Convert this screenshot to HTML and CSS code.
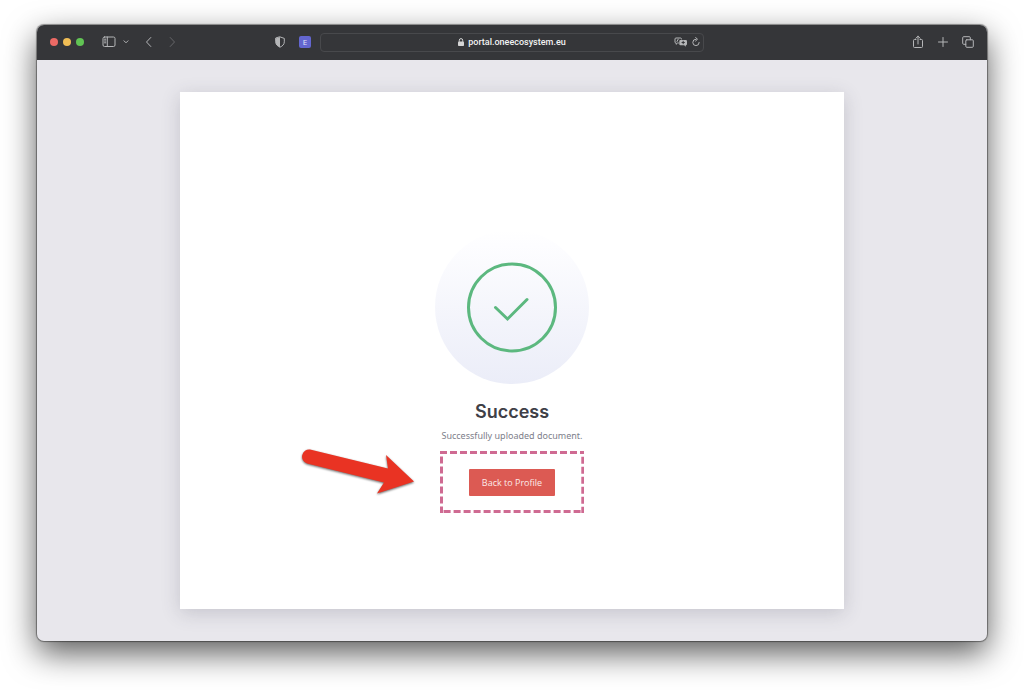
FILE: index.html
```
<!DOCTYPE html>
<html lang="en">
<head>
  <meta charset="UTF-8">
  <title>Success – portal.oneecosystem.eu</title>
  <meta name="viewport" content="width=device-width, initial-scale=1.0">
  <link rel="stylesheet" href="styles.css">
</head>
<body>
  <div class="window">
    <header class="toolbar">
      <div class="tools-left">
        <span class="light red"></span>
        <span class="light yellow"></span>
        <span class="light green"></span>
        <button class="tool sidebar" aria-label="Sidebar">
          <svg width="14" height="12" viewBox="0 0 14 12"><rect x="1" y="1" width="12" height="9.5" rx="1.5"/><path d="M5.3 1v9.5M2.5 3.2h1.3M2.5 5h1.3M2.5 6.8h1.3"/></svg>
        </button>
        <button class="tool chevron" aria-label="Tab groups">
          <svg width="6" height="4" viewBox="0 0 6 4"><path d="M1 .8l2 2 2-2"/></svg>
        </button>
        <button class="tool back" aria-label="Back">
          <svg width="7" height="12" viewBox="0 0 7 12"><path d="M5.8 1.5L1.5 6l4.3 4.5"/></svg>
        </button>
        <button class="tool forward" aria-label="Forward" disabled>
          <svg width="7" height="12" viewBox="0 0 7 12"><path d="M1.2 1.5L5.5 6l-4.3 4.5"/></svg>
        </button>
        <button class="tool shield" aria-label="Privacy report">
          <svg width="12" height="12" viewBox="0 0 12 12"><path d="M6 .9l4.3 1.5v3.4c0 2.6-1.8 4.3-4.3 5.4C3.5 10.1 1.7 8.4 1.7 5.8V2.4z"/><path class="fill" d="M6 .9v10.3C3.5 10.1 1.7 8.4 1.7 5.8V2.4z"/></svg>
        </button>
        <button class="tool extension" aria-label="Extension">E</button>
      </div>

      <div class="address">
        <span class="address-side"></span>
        <span class="url">
          <svg width="6" height="8" viewBox="0 0 6 8"><rect class="lock" x="0" y="3.5" width="6" height="4.5" rx=".8"/><path d="M1.3 3.8V2.3a1.7 1.7 0 0 1 3.4 0v1.5"/></svg>
          portal.oneecosystem.eu
        </span>
        <span class="address-side">
          <button class="tool" aria-label="Translate">
            <svg width="14" height="10" viewBox="0 0 14 10"><path d="M4.5 6H3.5L2.2 7.3V6H2a1 1 0 0 1-1-1V2a1 1 0 0 1 1-1h4.5a1 1 0 0 1 1 1M3 4.5l1.2-2.3"/><path class="fill" d="M6.5 3h5.3a1.2 1.2 0 0 1 1.2 1.2v2.8a1.2 1.2 0 0 1-1.2 1.2v1.5L10.2 8.2H6.5A1.2 1.2 0 0 1 5.3 7V4.2A1.2 1.2 0 0 1 6.5 3z"/><path class="cut" d="M9.2 4.2v2.6M8 5.5h2.4"/></svg>
          </button>
          <button class="tool" aria-label="Reload">
            <svg width="8" height="10" viewBox="0 0 8 10"><path d="M4 2.2A3.2 3.2 0 1 0 7.2 5.5M3.6.5l1.9 1.7L3.6 4"/></svg>
          </button>
        </span>
      </div>

      <div class="tools-right">
        <button class="tool" aria-label="Share">
          <svg width="12" height="14" viewBox="0 0 12 14"><path d="M4 4.5H2.5a1 1 0 0 0-1 1v6a1 1 0 0 0 1 1h7a1 1 0 0 0 1-1v-6a1 1 0 0 0-1-1H8M6 9V1.2M3.8 3.3L6 1.2l2.2 2.1"/></svg>
        </button>
        <button class="tool" aria-label="New tab">
          <svg width="12" height="12" viewBox="0 0 12 12"><path d="M6 1.5v9M1.5 6h9"/></svg>
        </button>
        <button class="tool" aria-label="Show tabs">
          <svg width="12" height="12" viewBox="0 0 12 12"><rect x="3.8" y="3.8" width="7.5" height="7.5" rx="1"/><path d="M3.8 8.3H1.7a1 1 0 0 1-1-1V1.7a1 1 0 0 1 1-1h5.6a1 1 0 0 1 1 1v2.1"/></svg>
        </button>
      </div>
    </header>

    <main class="page">
      <section class="card">
        <svg class="check" viewBox="0 0 154 154">
          <defs>
            <linearGradient id="fade" x1="0" y1="0" x2="0" y2="1">
              <stop offset="0" stop-color="#ffffff"/>
              <stop offset="0.1" stop-color="#fdfdff"/>
              <stop offset="1" stop-color="#ebedf8"/>
            </linearGradient>
          </defs>
          <circle cx="77" cy="77" r="77" fill="url(#fade)"/>
          <circle class="ring" cx="77" cy="77.5" r="43.5"/>
          <path class="tick" d="M60.5 77.5l12 11.5L92 69.5"/>
        </svg>
        <h1>Success</h1>
        <p>Successfully uploaded document.</p>
        <div class="highlight">
          <svg class="dashes" width="100%" height="100%"><rect width="100%" height="100%"/></svg>
          <button class="btn">Back to Profile</button>
          <svg class="arrow" width="120" height="52" viewBox="0 0 120 52"><path d="M10 4.5L88 23.5L86 10L114 36.5L77 48.5L84 37.5L7 18.5A7.2 7.2 0 0 1 10 4.5z"/></svg>
        </div>
      </section>
    </main>
  </div>
</body>
</html>
```
FILE: styles.css
```
* { box-sizing: border-box; }
body {
  margin: 0; padding: 25px 37px 49px; min-height: 100vh;
  display: flex; background: #fff;
  font-family: "Open Sans", "Noto Sans", sans-serif;
}
button { font-family: inherit; border: none; cursor: pointer; }
.window {
  flex: 1; display: flex; flex-direction: column;
  background: #e8e7ec; border-radius: 7px;
  box-shadow: 0 0 1px 1px rgba(0, 0, 0, 0.4), 0 12px 32px rgba(0, 0, 0, 0.65);
}

/* Browser toolbar */
.toolbar {
  display: grid; grid-template-columns: 1fr minmax(0, 384px) 1fr;
  align-items: center; height: 35px; padding-bottom: 1px;
  background: #353639; border-radius: 7px 7px 0 0;
}
.tools-left, .tools-right { display: flex; align-items: center; }
.tools-left { padding: 0 9px 0 13px; }
.tools-right { justify-content: flex-end; gap: 13px; padding-right: 13px; }
.light { width: 8px; height: 8px; border-radius: 50%; margin-right: 5px; }
.red { background: #ec6a65; }
.yellow { background: #f0bd55; }
.green { background: #61c454; }
.tool {
  display: flex; padding: 0; background: none; color: #b5b6b8;
}
.tool svg { fill: none; stroke: currentColor; stroke-width: 1; stroke-linecap: round; stroke-linejoin: round; }
.tool .fill { fill: currentColor; stroke: none; }
.tool .cut { stroke: #353639; }
.sidebar { margin-left: 13px; }
.chevron { margin-left: 7px; }
.back { margin-left: 16px; }
.forward { margin-left: 17px; color: #66676a; }
.shield { margin-left: auto; }
.extension {
  margin-left: 13px; width: 12px; height: 12px; border-radius: 2px;
  align-items: center; justify-content: center;
  background: #6366cf; color: #e4e5fa; font-size: 8px; line-height: 12px;
}
.address {
  display: flex; align-items: center; height: 19px; padding: 0 3px;
  border: 1px solid #48494c; border-radius: 4px;
}
.address-side { flex: 1; display: flex; align-items: center; justify-content: flex-end; gap: 4px; }
.url {
  display: flex; align-items: center; gap: 4px;
  color: #f2f2f2; font: 500 9px/12px Roboto, sans-serif;
}
.url svg { fill: none; stroke: #d5d5d6; stroke-width: 1; }
.url .lock { fill: #d5d5d6; stroke: none; }

/* Page content */
.page { flex: 1; display: flex; justify-content: center; padding: 32px; }
.card {
  width: 75%; padding-top: 42px;
  display: flex; flex-direction: column; align-items: center; justify-content: center;
  background: #fff; box-shadow: 0 4px 18px rgba(60, 60, 80, 0.2);
}
.check { width: 154px; height: 154px; }
.ring, .tick { fill: none; stroke: #5cb87f; stroke-width: 3; }
.tick { stroke-linecap: round; }
h1 { margin: 16px 0 0; font: 600 18px/24px Inter, sans-serif; color: #3f4047; }
p { margin: 4px 0 0; font-family: "Noto Sans", sans-serif; font-size: 9px; line-height: 16px; color: #7d7e8a; }
.highlight { position: relative; margin-top: 7px; padding: 18px 29px 17px; }
.dashes { position: absolute; inset: 0; }
.dashes rect { fill: none; stroke: #cf6a92; stroke-width: 6; stroke-dasharray: 7 3; }
.btn {
  display: block; padding: 0 13px; height: 27px; border-radius: 1px;
  background: #dc5a53; color: #fbe9e8; font-size: 9px; line-height: 27px;
}
.arrow { position: absolute; right: 100%; top: -6px; margin-right: 20px; }
.arrow path { fill: #e93323; filter: drop-shadow(0 1px 1px rgba(0, 0, 0, 0.6)); }
```
